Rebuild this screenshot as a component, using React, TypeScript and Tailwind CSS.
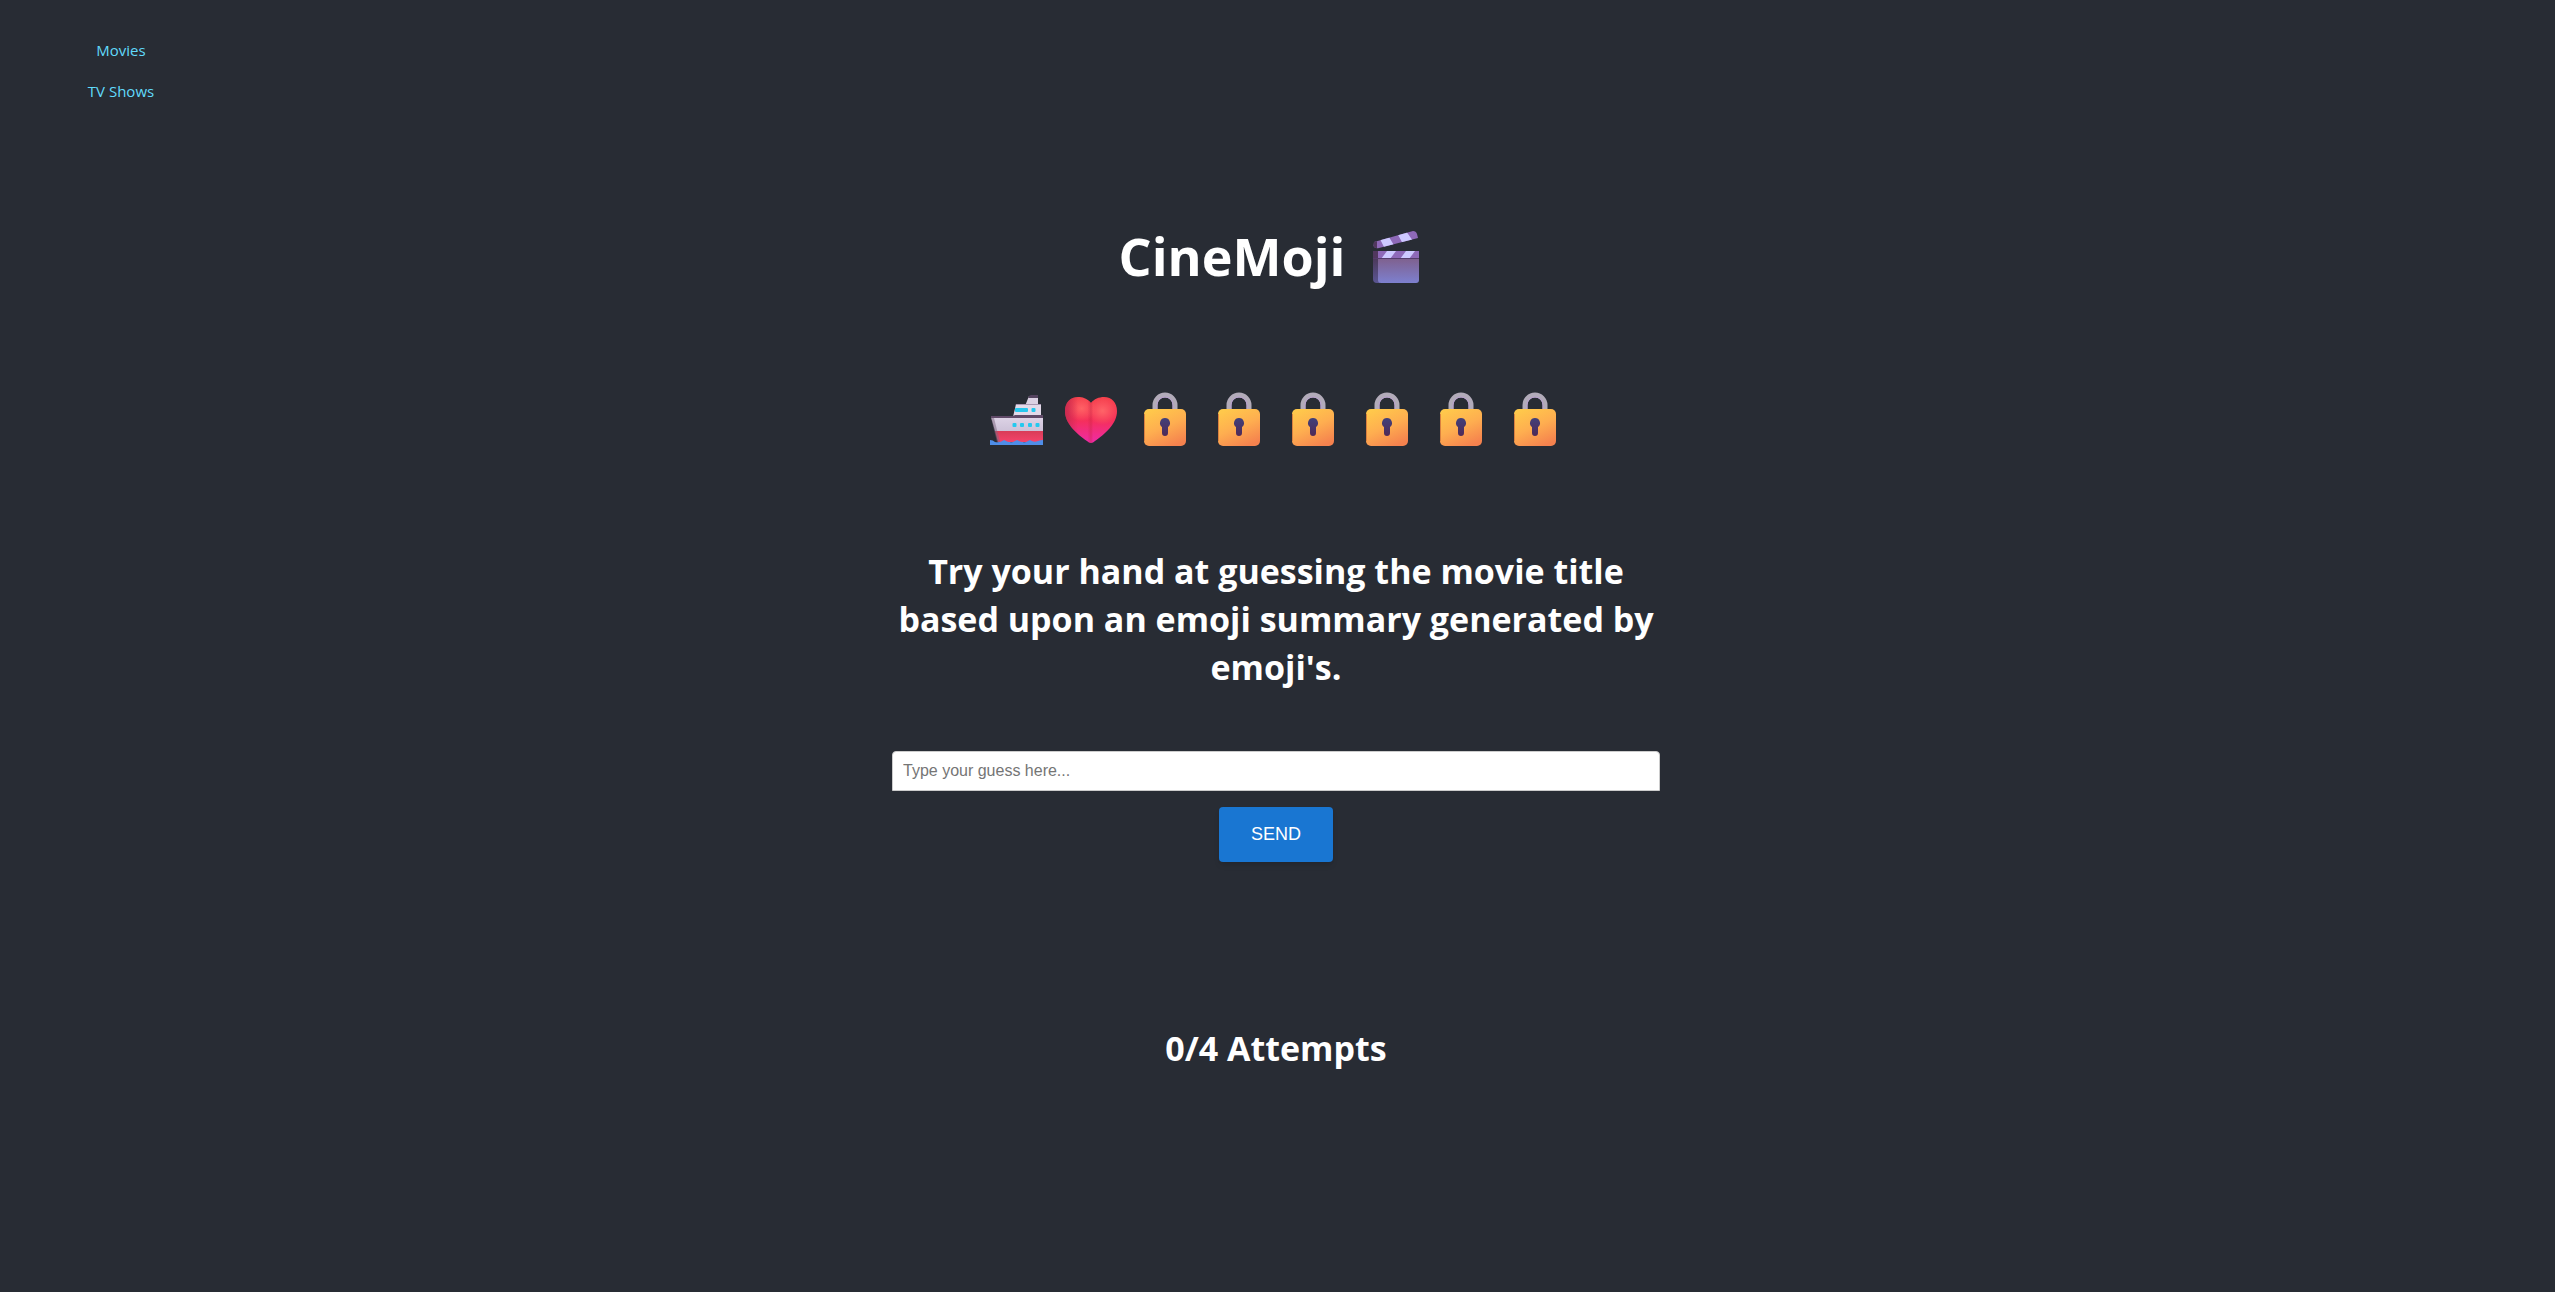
import React, { useState } from 'react';

const Clapper = () => (
  <svg viewBox="0 -1 56 56" className="size-14" role="img" aria-label="Clapper board">
    <defs>
      <linearGradient id="board" x1="0" y1="0" x2="0" y2="1">
        <stop offset="0" stopColor="#7f608d" />
        <stop offset="1" stopColor="#7d80cf" />
      </linearGradient>
      <linearGradient id="boardSide" x1="0" y1="0" x2="0" y2="1">
        <stop offset="0" stopColor="#4a3553" />
        <stop offset="1" stopColor="#5a5592" />
      </linearGradient>
      <clipPath id="arm">
        <path d="M5 13 L44 2 Q47 2 48 5 L49 9 L10 19 Q6 20 4.500 17 Z" />
      </clipPath>
      <clipPath id="strip">
        <path d="M4 22 H50 V30 H4 Z" />
      </clipPath>
    </defs>
    <path d="M4 26 H11 V54 H8 Q4 54 4 50 Z" fill="url(#boardSide)" />
    <path d="M9 29 H50 V51 Q50 54 47 54 H12 Q9 54 9 51 Z" fill="url(#board)" />
    <g clipPath="url(#strip)">
      <rect x="4" y="22" width="46" height="8" fill="#8e69b8" />
      <rect x="4" y="22" width="5" height="8" fill="#51375e" />
      <path d="M18 22 H27 L21 30 H12 Z M37 22 H46 L40 30 H31 Z" fill="#cdc8ff" />
    </g>
    <path d="M4 29.500 H50" stroke="#553b6b" strokeWidth="1" />
    <g clipPath="url(#arm)">
      <rect x="3" y="0" width="50" height="24" fill="#8e69b8" />
      <path d="M3 10 L8 10 L8 24 L3 24 Z" fill="#51375e" />
      <path d="M11 10 L20 8 L26 18 L16 20 Z M28 4 L37 2 L44 12 L34 15 Z" fill="#cdc8ff" />
    </g>
  </svg>
);

const Ship = () => (
  <svg viewBox="0 -1 54 54" className="size-[54px]" role="img" aria-label="Ship">
    <defs>
      <linearGradient id="hull" x1="0" y1="0" x2="0" y2="1">
        <stop offset="0" stopColor="#e0d6e8" />
        <stop offset="1" stopColor="#cdc2d8" />
      </linearGradient>
      <linearGradient id="keel" x1="0" y1="0" x2="0" y2="1">
        <stop offset="0" stopColor="#d83c58" />
        <stop offset="1" stopColor="#f5436b" />
      </linearGradient>
    </defs>
    <path d="M39 3 H48 V13 H35 Z" fill="#dbd1e3" />
    <path d="M41 2 H48 V5 H38 Q39 2 41 2 Z" fill="#54435f" />
    <path d="M26 11 H51 V24 H23 Z" fill="#e2d9e9" />
    <path d="M26 11 H51 V12 H26 Z" fill="#a898b2" />
    <path d="M1 24 H24 L25 22 H53 V38 H5 Z" fill="url(#hull)" />
    <path d="M1 23 H23 L25 22 H53 V25 H1 Z" fill="#604a68" />
    <path d="M5 38 H53 V49 H8 Z" fill="url(#keel)" />
    <path d="M1 25 L4 25 L10 49 L7 49 Z" fill="#7c657d" opacity=".5" />
    <rect x="25" y="15" width="13" height="4" rx="1" fill="#26c7ee" />
    <g fill="#24c9ef">
      <rect x="41.500" y="15" width="4" height="4" rx="1" />
      <rect x="22.500" y="30" width="4" height="4" rx="1" />
      <rect x="30" y="30" width="4" height="4" rx="1" />
      <rect x="38" y="30" width="4" height="4" rx="1" />
      <rect x="45.500" y="30" width="4" height="4" rx="1" />
    </g>
    <path d="M0 47 Q3 47 5 49 Q10 50 14 47 Q19 50 23 49 L27 47 Q32 50 36 49 L40 47 Q44 50 48 48 Q50 47 53 47 V52 H0 Z" fill="#4f8ee8" />
  </svg>
);

const Heart = () => (
  <svg viewBox="0 -1 54 54" className="size-[54px]" role="img" aria-label="Heart">
    <defs>
      <linearGradient id="heart" x1="0" y1="0" x2="0" y2="1">
        <stop offset="0" stopColor="#f5404a" />
        <stop offset=".5" stopColor="#f52f59" />
        <stop offset="1" stopColor="#ee2ba8" />
      </linearGradient>
      <radialGradient id="heartGlow" cx=".72" cy=".3" r=".3">
        <stop offset="0" stopColor="#ff6468" />
        <stop offset="1" stopColor="#ff6468" stopOpacity="0" />
      </radialGradient>
      <radialGradient id="heartGlowLeft" cx=".32" cy=".25" r=".28">
        <stop offset="0" stopColor="#ff6265" />
        <stop offset="1" stopColor="#ff6265" stopOpacity="0" />
      </radialGradient>
      <linearGradient id="heartEdge" x1="0" y1="0" x2="1" y2="0">
        <stop offset="0" stopColor="#b8264f" stopOpacity=".7" />
        <stop offset=".25" stopColor="#b8264f" stopOpacity="0" />
        <stop offset=".43" stopColor="#c92545" stopOpacity="0" />
        <stop offset=".5" stopColor="#c92545" stopOpacity=".4" />
        <stop offset=".54" stopColor="#c92545" stopOpacity="0" />
      </linearGradient>
    </defs>
    {['url(#heart)', 'url(#heartGlow)', 'url(#heartGlowLeft)', 'url(#heartEdge)'].map((fill) => (
      <path
        key={fill}
        d="M27 10 C23 5 18 4 14 4 C6 4 1 10 1 18 C1 31 13 41 23 48 Q27 52 31 48 C41 41 53 31 53 18 C53 10 48 4 40 4 C35 4 30 6 27 10 Z"
        fill={fill}
      />
    ))}
  </svg>
);

const Lock = () => (
  <svg viewBox="0 0 54 54" className="size-[54px]" role="img" aria-label="Locked">
    <defs>
      <linearGradient id="lockBody" x1=".2" y1="0" x2=".7" y2="1">
        <stop offset="0" stopColor="#ffc94b" />
        <stop offset=".5" stopColor="#feae50" />
        <stop offset="1" stopColor="#f5824e" />
      </linearGradient>
      <linearGradient id="keyhole" x1="0" y1="0" x2="0" y2="1">
        <stop offset="0" stopColor="#41407a" />
        <stop offset="1" stopColor="#502a57" />
      </linearGradient>
    </defs>
    <path d="M17 20 V13 A10 10 0 0 1 37 13 V20" fill="none" stroke="#b2abb9" strokeWidth="5" />
    <path d="M19 20 V13 A8 8 0 0 1 35 13 V20" fill="none" stroke="#b99fce" strokeWidth="1" />
    <rect x="6" y="17" width="42" height="37" rx="5" fill="url(#lockBody)" />
    <path d="M6.500 22 V49" stroke="#d98040" strokeWidth="1" />
    <path d="M27 26 A5 5 0 0 1 30 35 V41 Q30 44 27 44 Q24 44 24 41 V35 A5 5 0 0 1 27 26 Z" fill="url(#keyhole)" />
  </svg>
);

const NAV_LINKS = [
  { label: 'Movies', href: '#movies' },
  { label: 'TV Shows', href: '#tv-shows' },
];

const CLUES = [Ship, Heart, Lock, Lock, Lock, Lock, Lock, Lock];

const App: React.FC = () => {
  const [guess, setGuess] = useState('');

  return (
    <div className="min-h-screen bg-[#282c34] pr-[3px] text-white font-['Open_Sans',sans-serif]">
      {/* Nav */}
      <nav className="flex w-[242px] flex-col items-center gap-4 pt-[38px] text-[15px] leading-[25px] text-[#61dafb]">
        {NAV_LINKS.map((link) => (
          <a key={link.label} href={link.href}>
            {link.label}
          </a>
        ))}
      </nav>

      <main className="mx-auto flex w-full max-w-3xl flex-col items-center text-center">
        <h1 className="mt-[114px] flex items-center gap-6 pr-2 text-[52px] leading-[76px] font-bold">
          CineMoji <Clapper />
        </h1>

        {/* Clues */}
        <div className="mt-[98px] flex gap-5">
          {CLUES.map((Clue, i) => (
            <Clue key={i} />
          ))}
        </div>

        <h2 className="mt-[101px] text-[34px] leading-12 font-bold">
          Try your hand at guessing the movie title based upon an emoji summary generated by emoji's.
        </h2>

        <form className="mt-[60px] flex w-full flex-col items-center gap-4" onSubmit={(e) => e.preventDefault()}>
          <input
            type="text"
            aria-label="Your guess"
            placeholder="Type your guess here..."
            value={guess}
            onChange={(e) => setGuess(e.target.value)}
            className="h-10 w-full rounded-t-sm border border-[#ccc] bg-white px-2.5 font-['Liberation_Sans',sans-serif] text-base text-black placeholder:text-[#757575]"
          />
          <button
            type="submit"
            className="rounded-sm bg-[#1976d2] px-8 py-3.5 font-['Liberation_Sans',sans-serif] text-lg leading-[27px] shadow-md"
          >
            SEND
          </button>
        </form>

        <p className="mt-[162px] text-[34px] leading-12 font-bold">0/4 Attempts</p>
      </main>
    </div>
  );
};

export default App;
